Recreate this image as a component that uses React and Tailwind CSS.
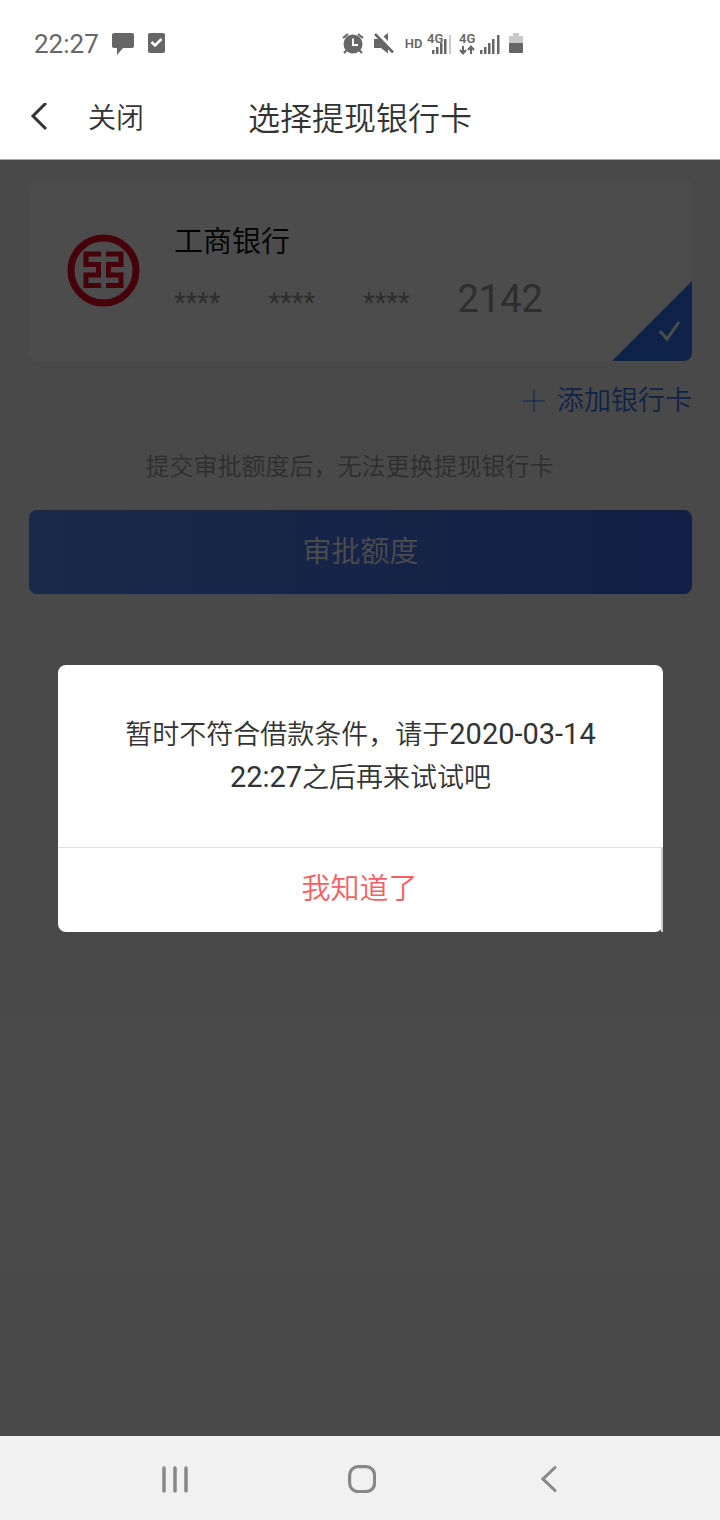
const signalBars = [
    { x: 0, h: 4 },
    { x: 4, h: 7 },
    { x: 8, h: 11 },
    { x: 12, h: 15 },
    { x: 17, h: 19 },
];

function StatusBar() {
    return (
        <div className="flex h-[74px] items-center bg-white pt-[14px] pl-[34px] font-normal text-[#666666]">
            <span className="text-[26px]">22:27</span>
            <svg className="ml-[13px] h-6 w-[22px]" viewBox="0 0 22 24" fill="currentColor">
                <path d="M2 1h18a2 2 0 0 1 2 2v11a2 2 0 0 1-2 2h-9l-6 7v-7H2a2 2 0 0 1-2-2V3a2 2 0 0 1 2-2z" />
            </svg>
            <svg className="ml-[14px] h-6 w-[17px]" viewBox="0 0 17 24">
                <rect y="1" width="17" height="20" rx="2" fill="currentColor" />
                <path d="M3.5 10l3.500 3.500 6.500-6.500" fill="none" stroke="#fff" strokeWidth="2.500" />
            </svg>

            <svg className="ml-[177px] h-6 w-[22px]" viewBox="0 0 22 24" fill="none" stroke="currentColor">
                <circle cx="11" cy="12" r="9.500" fill="currentColor" stroke="none" />
                <path d="M1 6l5-4M21 6l-5-4M5 18l-3 3M17 18l3 3" strokeWidth="2.200" />
                <path d="M11 6.500v6.500h5" stroke="#fff" strokeWidth="2" />
            </svg>
            <svg className="ml-[10px] h-6 w-5" viewBox="0 0 20 24" fill="currentColor">
                <path d="M0 7h6l8 8v6.500L7 16H0zM14 1v8L9.500 4.500z" />
                <path d="M1 2L19 20.500" stroke="currentColor" strokeWidth="2.600" />
            </svg>
            <span className="ml-[11px] text-[13px] font-semibold">HD</span>
            <svg className="ml-[5px] h-6 w-6" viewBox="0 0 24 24" fill="currentColor">
                <text x="0" y="11" fontSize="13" fontWeight="600">4G</text>
                {signalBars.map((bar, i) => (
                    <rect key={bar.x} x={bar.x + 5} y={22 - bar.h} width="2.500" height={bar.h} opacity={i === 4 ? 0.35 : 1} />
                ))}
            </svg>
            <svg className="ml-2 h-6 w-[41px]" viewBox="0 0 41 24" fill="currentColor">
                <text x="0" y="11" fontSize="13" fontWeight="600">4G</text>
                <path d="M4 14v7M1 18l3 3.500 3-3.500M12 22v-7M9 18l3-3.500 3 3.500" fill="none" stroke="currentColor" strokeWidth="2" />
                {signalBars.map((bar) => (
                    <rect key={bar.x} x={bar.x + 21} y={22 - bar.h} width="2.500" height={bar.h} />
                ))}
            </svg>
            <svg className="ml-[9px] h-6 w-[14px]" viewBox="0 0 14 24" fill="currentColor">
                <path d="M4 1h6v3h4v7H0V4h4z" opacity="0.35" />
                <path d="M0 11h14v9a1 1 0 0 1-1 1H1a1 1 0 0 1-1-1z" />
            </svg>
        </div>
    );
}

function Header() {
    return (
        <header className="grid h-[86px] grid-cols-[1fr_auto_1fr] items-center border-b border-[#a9a9a9] bg-white text-[#333333]">
            <div className="flex items-center pl-[30px]">
                <button type="button" aria-label="返回" className="mr-10">
                    <svg className="h-7 w-[18px]" viewBox="0 0 18 28" fill="none" stroke="currentColor" strokeWidth="3">
                        <path d="M16 0L3 13l13 13" />
                    </svg>
                </button>
                <button type="button" className="pt-1 text-[28px]">关闭</button>
            </div>
            <h1 className="pt-1 text-[32px] font-[350]">选择提现银行卡</h1>
        </header>
    );
}

function BankLogo() {
    return (
        <svg className="h-[73px] w-[73px] shrink-0" viewBox="0 0 73 73" fill="none" stroke="#e60020">
            <circle cx="36.500" cy="36.500" r="32.500" strokeWidth="7" />
            <path d="M34 20H19v10.500h12.500v10.500H19v10.500H34M39 20h15v10.500H41.500v10.500H54v10.500H39" strokeWidth="5" />
        </svg>
    );
}

function BankCard() {
    return (
        <label className="relative flex h-[181px] items-center gap-[34px] overflow-hidden rounded-lg bg-white pl-[38px]">
            <input type="radio" name="card" defaultChecked className="sr-only" />
            <BankLogo />
            <div className="leading-[60px]">
                <div className="h-[60px] pt-[3px] text-[29px] text-black">工商银行</div>
                <div className="flex items-baseline gap-12 text-[27px] font-normal text-[#999999]">
                    <span>****</span>
                    <span>****</span>
                    <span>****</span>
                    <span className="text-[38px]">2142</span>
                </div>
            </div>
            <svg className="absolute right-0 bottom-0 h-20 w-20" viewBox="0 0 80 80">
                <path d="M80 0v80H0z" fill="#3575f3" />
                <path d="M48 50l7 8 12-17" fill="none" stroke="#fff" strokeWidth="3" />
            </svg>
        </label>
    );
}

function Dialog() {
    return (
        <div className="absolute inset-0 flex items-center justify-center bg-black/70 pr-[57px] pl-[58px]">
            <div role="dialog" aria-modal="true" className="w-full rounded-lg bg-white">
                <p className="px-[60px] py-12 text-center text-[27px] leading-[42px] text-[#333333]">
                    暂时不符合借款条件，请于<span className="text-[29px] font-normal">2020-03-14</span>
                    <br />
                    <span className="text-[29px] font-normal">22:27</span>之后再来试试吧
                </p>
                <div className="border-t border-r-2 border-t-[#dddddd] border-r-[#cccccc]">
                    <button type="button" className="h-[84px] w-full text-[29px] text-[#f75f62]">我知道了</button>
                </div>
            </div>
        </div>
    );
}

function NavBar() {
    return (
        <nav className="flex h-[84px] items-center bg-[#f1f1f1] pt-0.5 pr-[77px] pl-[81px] text-[#888888]">
            <button type="button" aria-label="最近任务" className="flex flex-1 justify-center">
                <svg className="h-7 w-[26px]" viewBox="0 0 26 28" fill="none" stroke="currentColor" strokeWidth="3.500" strokeLinecap="round">
                    <path d="M2 3v23M13 3v23M24 3v23" />
                </svg>
            </button>
            <button type="button" aria-label="主屏幕" className="flex flex-1 justify-center">
                <svg className="h-7 w-7" viewBox="0 0 28 28" fill="none" stroke="currentColor" strokeWidth="3.200">
                    <rect x="1.600" y="1.600" width="25" height="25" rx="8.500" />
                </svg>
            </button>
            <button type="button" aria-label="后退" className="flex flex-1 justify-center">
                <svg className="h-7 w-4" viewBox="0 0 16 28" fill="none" stroke="currentColor" strokeWidth="3" strokeLinecap="round">
                    <path d="M14 2.500L2 14l12 11.500" />
                </svg>
            </button>
        </nav>
    );
}

export default function App() {
    return (
        <div className="flex min-h-screen flex-col font-[Roboto,'Noto_Sans_CJK_SC',sans-serif] font-[350]">
            <StatusBar />
            <Header />
            <main className="relative flex flex-1 flex-col bg-[#f5f5f5] pt-5 pr-7 pl-[29px]">
                <BankCard />
                <button type="button" className="mt-5 flex items-center gap-3 self-end text-[27px] leading-10 text-[#3575f3]">
                    <svg className="h-[22px] w-[22px]" viewBox="0 0 22 22" fill="none" stroke="currentColor">
                        <path d="M11 0v22M0 11h22" />
                    </svg>
                    添加银行卡
                </button>
                <p className="mt-[30px] pr-[22px] text-center text-2xl leading-8 text-[#999999]">提交审批额度后，无法更换提现银行卡</p>
                <button type="button" className="mt-[27px] h-[84px] rounded-lg bg-linear-to-r from-[#508af7] to-[#4068e9] pt-0.5 text-[29px] text-white">
                    审批额度
                </button>
                <Dialog />
            </main>
            <NavBar />
        </div>
    );
}
